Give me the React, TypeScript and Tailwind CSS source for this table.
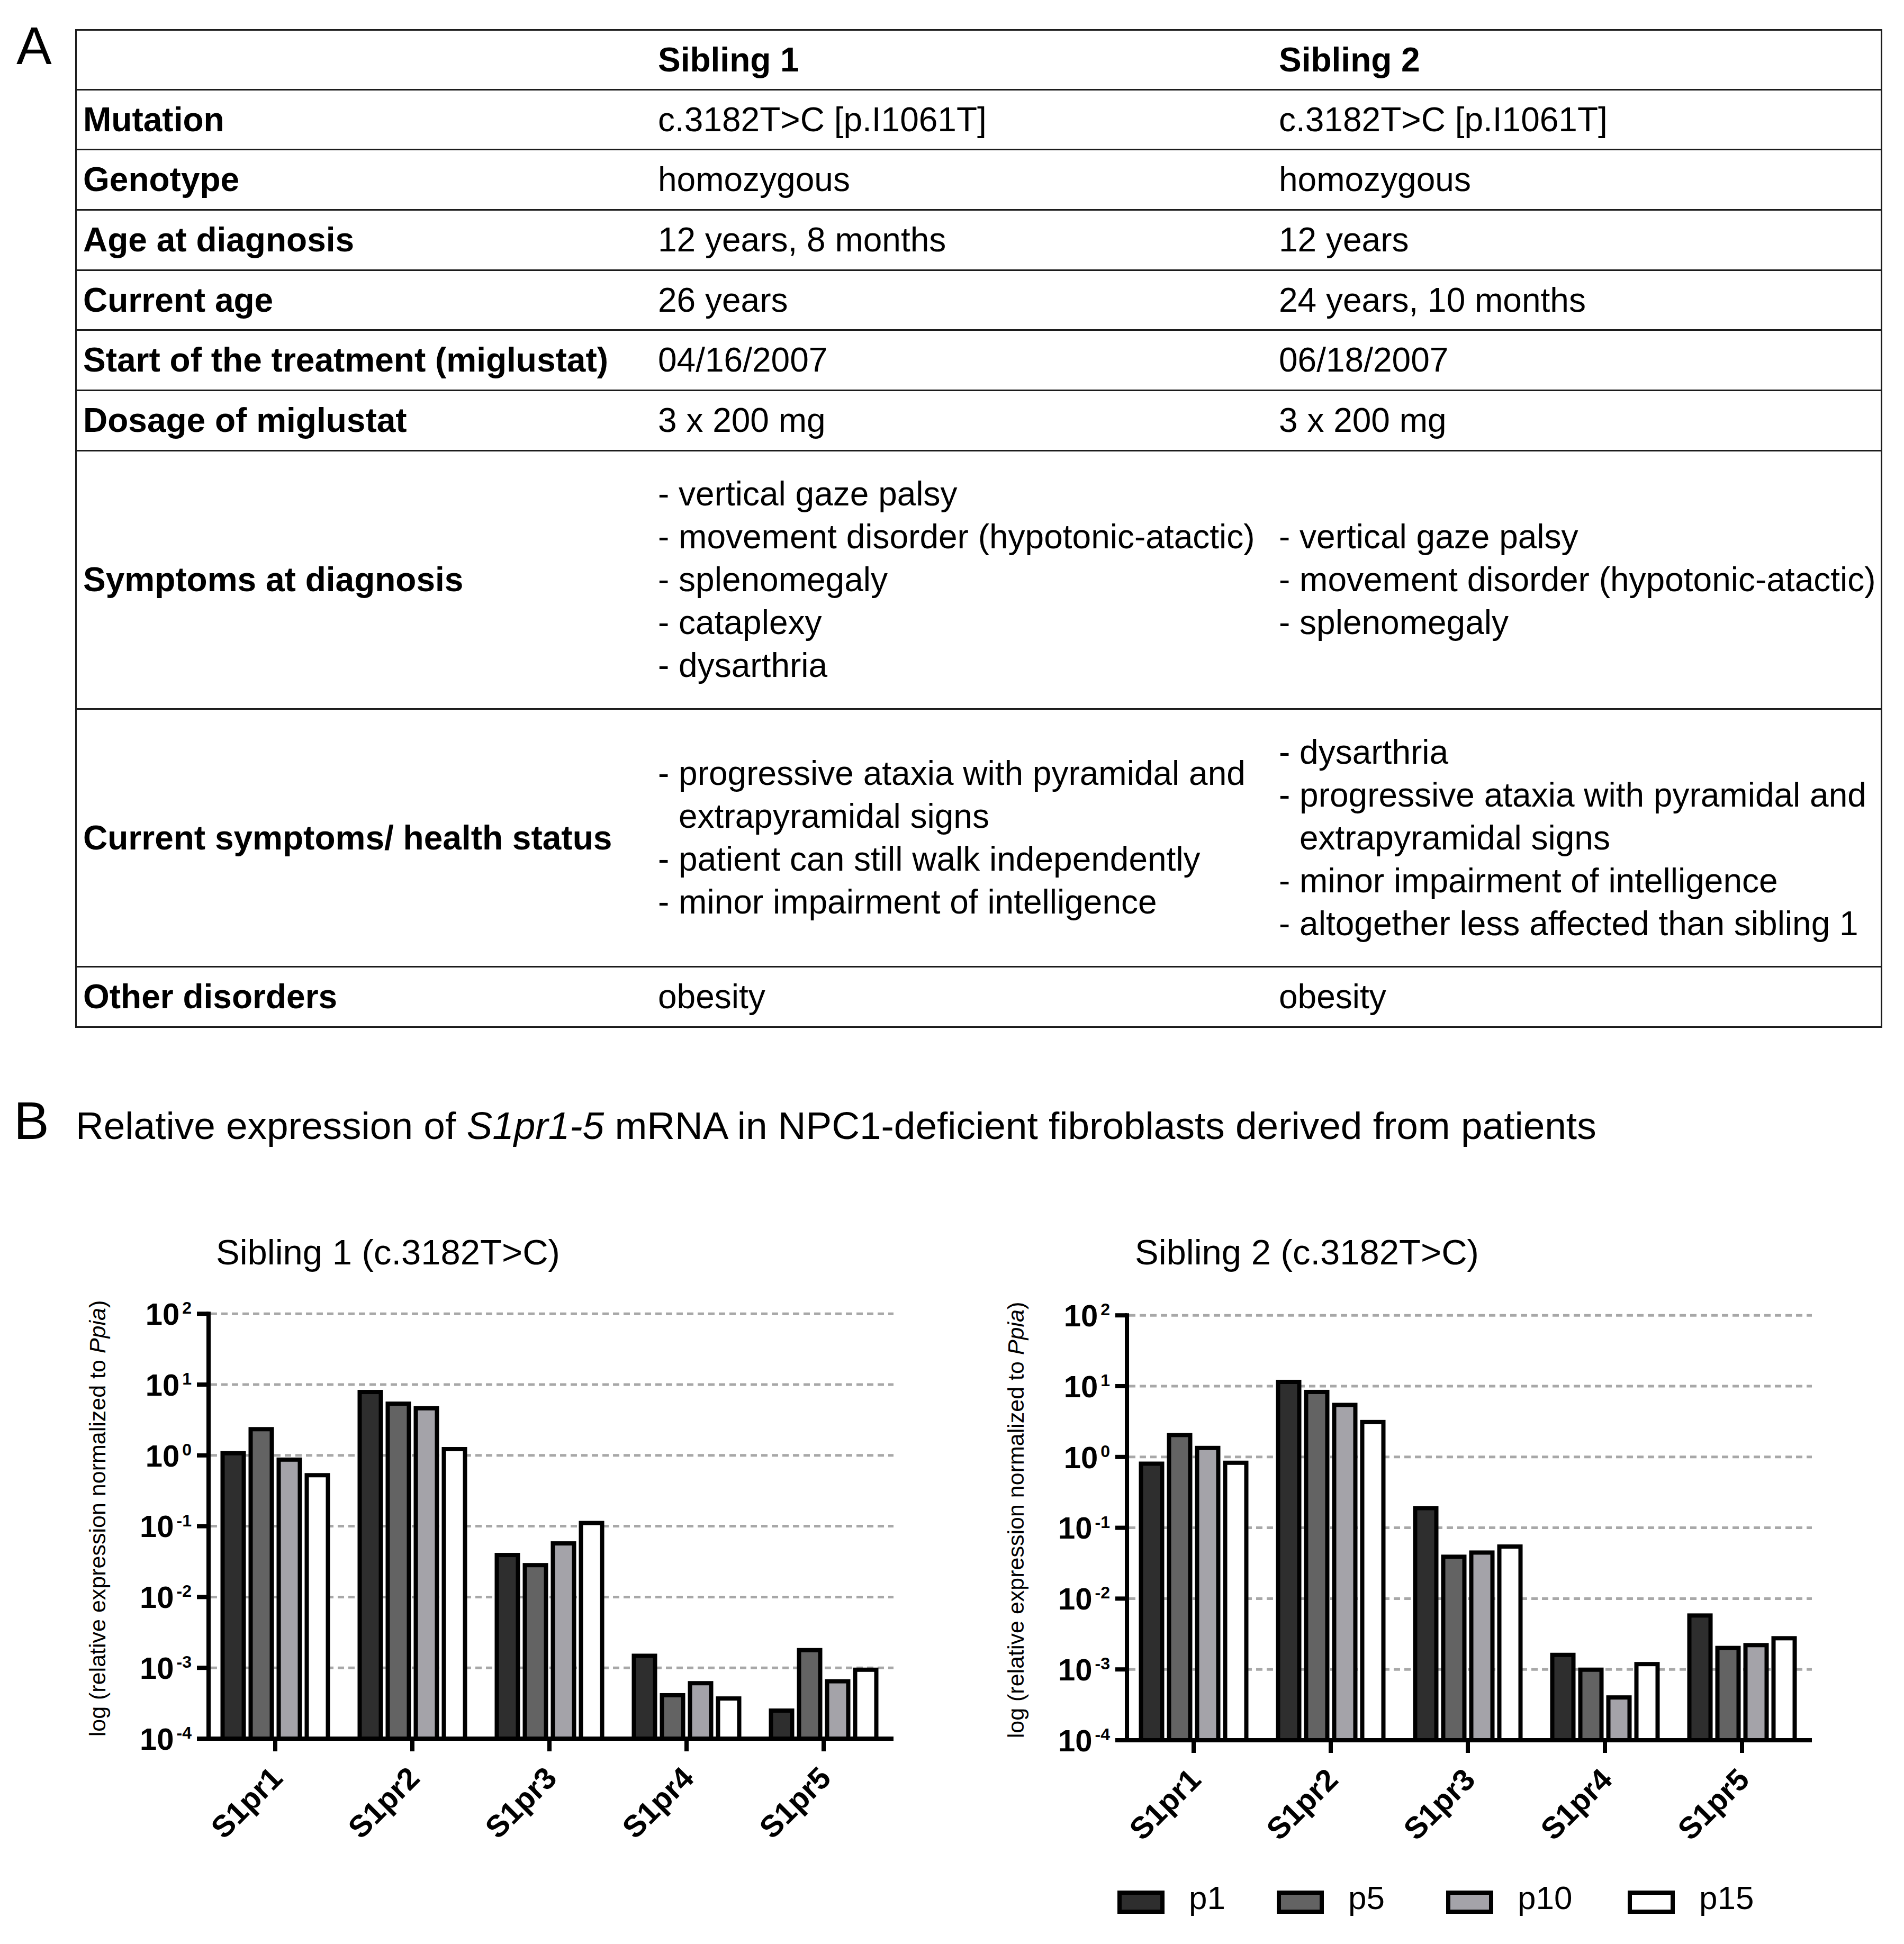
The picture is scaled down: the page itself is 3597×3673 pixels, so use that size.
import React from "react";

const D = 133.8;
const AX_Y = 855;
const AX_X = 254;
const yOf = (v: number) => AX_Y - (v + 4) * D;
const FILLS = ["#2e2e2e", "#636363", "#a4a3a9", "#ffffff"];
const GRID = [2, 1, 0, -1, -2, -3];
const LABELS = [2, 1, 0, -1, -2, -3, -4];

const DATA1: number[][] = [
  [0.06, 0.4, -0.03, -0.25],
  [0.925, 0.76, 0.695, 0.118],
  [-1.377, -1.52, -1.213, -0.925],
  [-2.8, -3.357, -3.187, -3.403],
  [-3.574, -2.72, -3.16, -2.997],
];

const DATA2: number[][] = [
  [-0.065, 0.34, 0.157, -0.052],
  [1.09, 0.948, 0.765, 0.523],
  [-0.693, -1.379, -1.32, -1.235],
  [-2.765, -2.974, -3.366, -2.895],
  [-2.209, -2.667, -2.627, -2.53],
];

function Chart({ data }: { data: number[][] }) {
  return (
    <svg
      width={1560}
      height={1090}
      className="block"
      fontFamily="'Liberation Sans', Arial, sans-serif"
    >
      {GRID.map((e) => (
        <line
          key={`g${e}`}
          x1={258}
          x2={1548}
          y1={yOf(e)}
          y2={yOf(e)}
          stroke="#a8a8a8"
          strokeWidth={5}
          strokeDasharray="12 8"
        />
      ))}
      {data.map((g, i) =>
        g.map((v, j) => {
          const cx = 380 + i * 259 + (j - 1.5) * 53;
          const top = yOf(v);
          return (
            <rect
              key={`b${i}-${j}`}
              x={cx - 20}
              y={top + 4}
              width={40}
              height={AX_Y - top - 4}
              fill={FILLS[j]}
              stroke="#000"
              strokeWidth={8}
            />
          );
        })
      )}
      <line x1={AX_X} x2={AX_X} y1={yOf(2) - 4} y2={AX_Y + 4} stroke="#000" strokeWidth={8} />
      {GRID.map((e) => (
        <line key={`t${e}`} x1={232} x2={AX_X} y1={yOf(e)} y2={yOf(e)} stroke="#000" strokeWidth={8} />
      ))}
      <line x1={232} x2={1548} y1={AX_Y} y2={AX_Y} stroke="#000" strokeWidth={8} />
      {[0, 1, 2, 3, 4].map((i) => {
        const cx = 380 + i * 259;
        return (
          <g key={`x${i}`}>
            <line x1={cx} x2={cx} y1={AX_Y} y2={AX_Y + 24} stroke="#000" strokeWidth={8} />
            <text
              transform={`translate(${cx + 17} 933) rotate(-45)`}
              textAnchor="end"
              fontWeight="bold"
              fontSize={58}
              fill="#000"
            >
              S1pr{i + 1}
            </text>
          </g>
        );
      })}
      {LABELS.map((e) => (
        <text
          key={`l${e}`}
          x={222}
          y={yOf(e) + 20.8}
          textAnchor="end"
          fontWeight="bold"
          fontSize={58}
          fill="#000"
        >
          10
          <tspan dx={5} dy={-20.8} fontSize={32}>
            {e}
          </tspan>
        </text>
      ))}
      <text transform="translate(59 439) rotate(-90)" textAnchor="middle" fontSize={43} fill="#000">
        log (relative expression normalized to <tspan fontStyle="italic">Ppia</tspan>)
      </text>
    </svg>
  );
}

function Row({
  h,
  label,
  a,
  b,
  last,
}: {
  h: string;
  label: React.ReactNode;
  a: React.ReactNode;
  b: React.ReactNode;
  last?: boolean;
}) {
  return (
    <div
      className={`grid grid-cols-[1098px_1173px_1fr] items-center ${h} ${
        last ? "" : "border-b-[3px] border-[#1c1c1c]"
      }`}
    >
      <div className="pl-[12px] font-bold whitespace-nowrap">{label}</div>
      <div className="whitespace-nowrap">{a}</div>
      <div className="whitespace-nowrap">{b}</div>
    </div>
  );
}

function Item({ children }: { children: React.ReactNode }) {
  return <div className="pl-[39px] -indent-[39px]">{children}</div>;
}

function Legend() {
  const items = [
    { l: "p1", c: "bg-[#2e2e2e]", w: "w-[301px]" },
    { l: "p5", c: "bg-[#636363]", w: "w-[320px]" },
    { l: "p10", c: "bg-[#a4a3a9]", w: "w-[343px]" },
    { l: "p15", c: "bg-white", w: "w-[300px]" },
  ];
  return (
    <div className="flex ml-[236px] mt-[32px]">
      {items.map((it) => (
        <div key={it.l} className={`flex items-start ${it.w}`}>
          <div className={`mt-[17px] w-[89px] h-[44px] border-[8px] border-black ${it.c}`} />
          <div className="ml-[46px] text-[62px] leading-none">{it.l}</div>
        </div>
      ))}
    </div>
  );
}

export default function App() {
  return (
    <div className="relative w-[3597px] h-[3673px] bg-white text-black font-[family-name:Liberation_Sans,Arial,sans-serif] overflow-hidden">
      {/* Section A */}
      <div className="flex items-start pt-[36px]">
        <div className="w-[142px] pl-[31px] text-[100px] leading-none">A</div>
        <div className="mt-[19px] w-[3414px] border-[3px] border-[#1c1c1c] text-[64px] leading-[81px]">
          <Row h="h-[113px]" label="" a={<span className="font-bold">Sibling 1</span>} b={<span className="font-bold">Sibling 2</span>} />
          <Row h="h-[113px]" label="Mutation" a="c.3182T>C [p.I1061T]" b="c.3182T>C [p.I1061T]" />
          <Row h="h-[114px]" label="Genotype" a="homozygous" b="homozygous" />
          <Row h="h-[114px]" label="Age at diagnosis" a="12 years, 8 months" b="12 years" />
          <Row h="h-[113px]" label="Current age" a="26 years" b="24 years, 10 months" />
          <Row h="h-[114px]" label="Start of the treatment (miglustat)" a="04/16/2007" b="06/18/2007" />
          <Row h="h-[114px]" label="Dosage of miglustat" a="3 x 200 mg" b="3 x 200 mg" />
          <Row
            h="h-[488px]"
            label="Symptoms at diagnosis"
            a={
              <div>
                <Item>- vertical gaze palsy</Item>
                <Item>- movement disorder (hypotonic-atactic)</Item>
                <Item>- splenomegaly</Item>
                <Item>- cataplexy</Item>
                <Item>- dysarthria</Item>
              </div>
            }
            b={
              <div>
                <Item>- vertical gaze palsy</Item>
                <Item>- movement disorder (hypotonic-atactic)</Item>
                <Item>- splenomegaly</Item>
              </div>
            }
          />
          <Row
            h="h-[487px]"
            label="Current symptoms/ health status"
            a={
              <div>
                <Item>
                  - progressive ataxia with pyramidal and
                  <br />
                  extrapyramidal signs
                </Item>
                <Item>- patient can still walk independently</Item>
                <Item>- minor impairment of intelligence</Item>
              </div>
            }
            b={
              <div>
                <Item>- dysarthria</Item>
                <Item>
                  - progressive ataxia with pyramidal and
                  <br />
                  extrapyramidal signs
                </Item>
                <Item>- minor impairment of intelligence</Item>
                <Item>- altogether less affected than sibling 1</Item>
              </div>
            }
          />
          <Row h="h-[111px]" label="Other disorders" a="obesity" b="obesity" last />
        </div>
      </div>

      {/* Section B */}
      <div className="flex items-baseline mt-[125px]">
        <div className="w-[143px] pl-[26px] text-[100px] leading-none">B</div>
        <div className="text-[73px] leading-none whitespace-nowrap">
          Relative expression of <i>S1pr1-5</i> mRNA in NPC1-deficient fibroblasts derived from patients
        </div>
      </div>

      <div className="flex mt-[165px]">
        <div className="ml-[140px] w-[1735px]">
          <div className="pl-[268px] text-[67px] leading-none whitespace-nowrap">Sibling 1 (c.3182T&gt;C)</div>
          <div className="mt-[31px]">
            <Chart data={DATA1} />
          </div>
        </div>
        <div className="w-[1600px]">
          <div className="pl-[269px] text-[67px] leading-none whitespace-nowrap">Sibling 2 (c.3182T&gt;C)</div>
          <div className="mt-[34px]">
            <Chart data={DATA2} />
          </div>
          <Legend />
        </div>
      </div>
    </div>
  );
}
